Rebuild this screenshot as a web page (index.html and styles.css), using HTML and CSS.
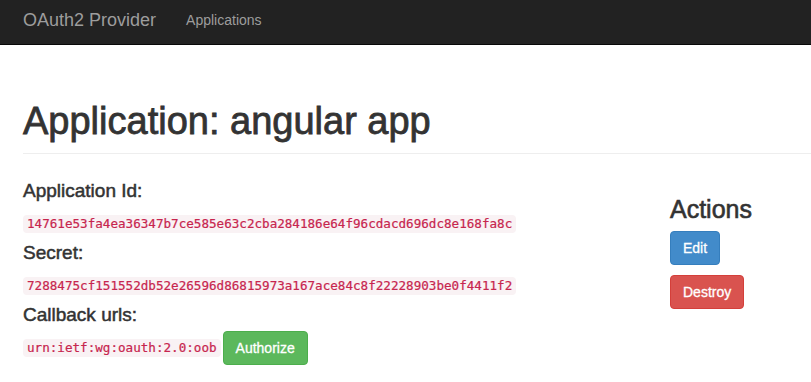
FILE: index.html
```html
<!DOCTYPE html>
<html lang="en">
<head>
    <meta charset="UTF-8">
    <meta name="viewport" content="width=device-width, initial-scale=1.0">
    <title>Application: angular app - OAuth2 Provider</title>
    <link rel="stylesheet" href="styles.css">
</head>
<body>
    <header class="navbar">
        <a class="navbar-brand" href="#">OAuth2 Provider</a>
        <nav class="navbar-menu">
            <a href="#">Applications</a>
        </nav>
    </header>

    <div class="content">
        <div class="page-header">
            <h1>Application: angular app</h1>
        </div>

        <div class="row">
            <div class="app-details">
                <h4>Application Id:</h4>
                <p><code>14761e53fa4ea36347b7ce585e63c2cba284186e64f96cdacd696dc8e168fa8c</code></p>

                <h4>Secret:</h4>
                <p><code>7288475cf151552db52e26596d86815973a167ace84c8f22228903be0f4411f2</code></p>

                <h4>Callback urls:</h4>
                <div class="callback">
                    <code>urn:ietf:wg:oauth:2.0:oob</code><a href="#" class="btn btn-success">Authorize</a>
                </div>
            </div>

            <div class="actions">
                <h3>Actions</h3>
                <a href="#" class="btn btn-primary">Edit</a>
                <a href="#" class="btn btn-danger">Destroy</a>
            </div>
        </div>
    </div>
</body>
</html>
```

FILE: styles.css
```css
* {
    margin: 0;
    padding: 0;
    box-sizing: border-box;
}

body {
    font-family: 'Liberation Sans', Arial, sans-serif;
    font-size: 14px;
    color: #333;
    background-color: #fff;
}

a {
    text-decoration: none;
}

.navbar {
    display: flex;
    align-items: flex-start;
    height: 45px;
    padding: 10px 0 0 23px;
    background-color: #222;
    border-bottom: 1px solid #080808;
}

.navbar-brand {
    font-size: 18px;
    line-height: 20px;
    color: #9d9d9d;
}

.navbar-menu {
    margin-left: 30px;
}

.navbar-menu a {
    font-size: 14px;
    line-height: 20px;
    color: #9d9d9d;
}

.content {
    padding-left: 23px;
}

.page-header {
    margin-top: 55px;
    padding-bottom: 11px;
    border-bottom: 1px solid #eee;
}

/* headings are medium weight, a stroke thickens the regular face */
.page-header h1 {
    font-size: 38px;
    font-weight: 500;
    line-height: 42px;
    -webkit-text-stroke: 0.8px #333;
}

.row {
    display: flex;
}

.app-details {
    flex: 0 0 647px;
    padding-top: 27px;
}

.app-details h4 {
    font-size: 19px;
    font-weight: 500;
    line-height: 20px;
    -webkit-text-stroke: 0.5px #333;
}

.app-details p {
    margin: 13px 0 10px;
    line-height: 18px;
}

code {
    display: inline-block;
    padding: 2px 4px;
    font-family: 'DejaVu Sans Mono', 'Liberation Mono', monospace;
    font-size: 12.6px;
    line-height: 14px;
    color: #c7254e;
    background-color: #f9f2f4;
    border-radius: 4px;
    -webkit-text-stroke: 0.2px #c7254e;
}

.callback {
    display: flex;
    align-items: center;
    margin-top: 6px;
}

.callback .btn {
    margin-left: 2px;
}

.actions {
    flex: 1;
    padding-top: 42px;
    display: flex;
    flex-direction: column;
    align-items: flex-start;
}

.actions h3 {
    font-size: 25px;
    font-weight: 500;
    line-height: 27px;
    margin-bottom: 8px;
    -webkit-text-stroke: 0.6px #333;
}

.actions .btn {
    margin-bottom: 10px;
}

.btn {
    display: inline-block;
    padding: 6px 12px;
    font-size: 14px;
    line-height: 20px;
    color: #fff;
    border: 1px solid transparent;
    border-radius: 4px;
    cursor: pointer;
    -webkit-text-stroke: 0.3px #fff;
}

.btn-primary {
    background-color: #428bca;
    border-color: #357ebd;
}

.btn-danger {
    background-color: #d9534f;
    border-color: #d43f3a;
}

.btn-success {
    background-color: #5cb85c;
    border-color: #4cae4c;
}
```
